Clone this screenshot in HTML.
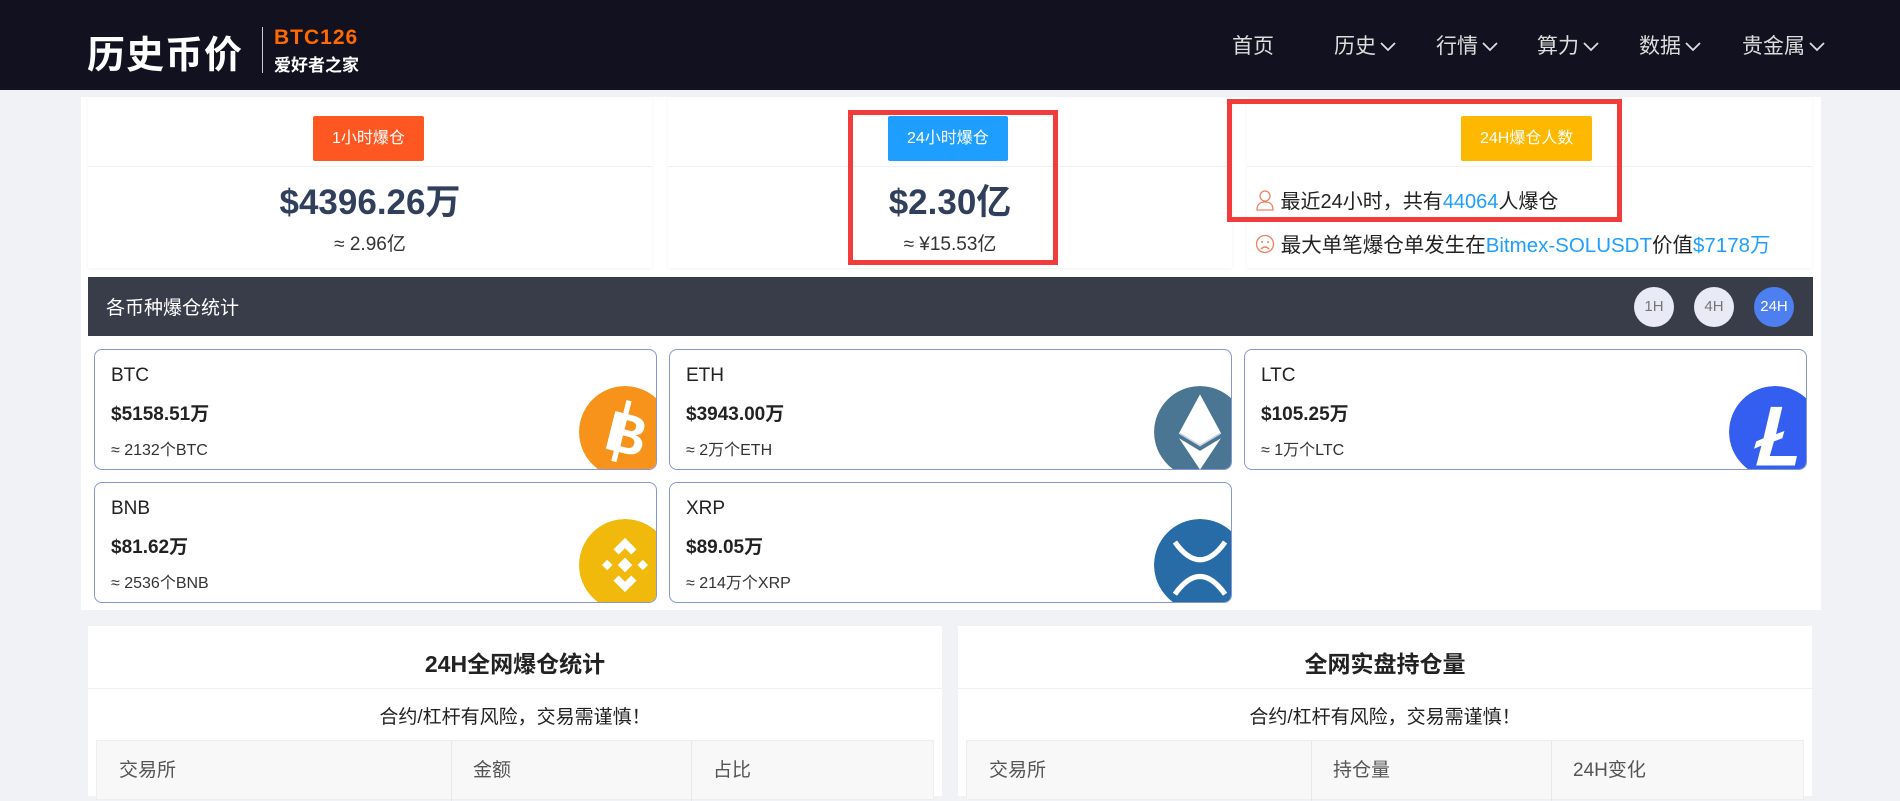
<!DOCTYPE html>
<html><head><meta charset="utf-8">
<style>
*{margin:0;padding:0;box-sizing:border-box}
body{width:1900px;height:788px;overflow:hidden;background:#f0f2f5;font-family:"Liberation Sans","Noto Sans CJK SC",sans-serif;color:#333;position:relative}
.abs{position:absolute}
.hdr{left:0;top:0;width:1900px;height:90px;background:#12111f}
.logo{left:87px;top:24px;color:#fff;font-size:38px;font-weight:bold;letter-spacing:1px}
.div{left:262px;top:27px;width:1px;height:46px;background:#ccc}
.btc{left:274px;top:26px;color:#ff6a00;font-size:21px;font-weight:bold;letter-spacing:1px}
.ahz{left:274px;top:51px;color:#fff;font-size:17px;font-weight:bold}
.nav{top:30px;color:#ddd;font-size:21px}
.nav svg{vertical-align:middle;margin-left:4px}
.main{left:81px;top:97px;width:1740px;height:513px;background:#fff}
.card{background:#fff;box-shadow:0 1px 3px rgba(0,0,0,.06);top:97px;height:171px}
.card .hd{height:70px;border-bottom:1px solid #f0f0f0}
.badge{position:absolute;top:19px;height:45px;line-height:45px;color:#fff;font-size:16px;padding:0 19px;border-radius:2px}
.big{position:absolute;width:100%;text-align:center;top:77px;font-size:35px;font-weight:bold;color:#2f3f5c}
.sm{position:absolute;width:100%;text-align:center;top:132px;font-size:19px;color:#333}
.red{border:5px solid #f23b3b}
.bar{left:88px;top:277px;width:1725px;height:59px;background:#393d49;color:#fff;font-size:19px;padding:16px 0 0 18px}
.circ{top:287px;width:40px;height:40px;border-radius:50%;background:#e8eaf5;color:#777;font-size:15px;text-align:center;line-height:40px}
.coin{width:563px;height:121px;border:1px solid #8497d4;border-radius:8px;overflow:hidden;background:#fff}
.coin .n{position:absolute;left:16px;top:15px;font-size:19px;color:#222}
.coin .v{position:absolute;left:16px;top:49px;font-size:19px;font-weight:bold;color:#222}
.coin .a{position:absolute;left:16px;top:86px;font-size:16px;color:#333}
.coin .ic{position:absolute;left:484px;top:36px;width:92px;height:92px;border-radius:50%}
.panel{top:626px;width:854px;height:170px;background:#fff}
.panel .t{position:absolute;width:100%;top:19px;text-align:center;font-size:23px;font-weight:bold;color:#222}
.panel .l{position:absolute;left:0;top:62px;width:100%;height:1px;background:#f0f0f0}
.panel .s{position:absolute;width:100%;top:76px;text-align:center;font-size:19px;color:#222}
.panel .tb{position:absolute;left:8px;top:114px;width:838px;height:60px;background:#f8f8f8;border:1px solid #eee}
.tb span{position:absolute;top:14px;font-size:19px;color:#555}
.tb i{position:absolute;top:0;width:1px;height:60px;background:#e8e8e8}
</style></head><body>
<div class="abs hdr"></div>
<div class="abs logo">历史币价</div>
<div class="abs div"></div>
<div class="abs btc">BTC126</div>
<div class="abs ahz">爱好者之家</div>
<div class="abs nav" style="left:1232px">首页</div>
<div class="abs nav" style="left:1334px">历史<svg width="16" height="10" viewBox="0 0 16 10"><path d="M1 1l7 7 7-7" fill="none" stroke="#ddd" stroke-width="1.8"/></svg></div>
<div class="abs nav" style="left:1436px">行情<svg width="16" height="10" viewBox="0 0 16 10"><path d="M1 1l7 7 7-7" fill="none" stroke="#ddd" stroke-width="1.8"/></svg></div>
<div class="abs nav" style="left:1537px">算力<svg width="16" height="10" viewBox="0 0 16 10"><path d="M1 1l7 7 7-7" fill="none" stroke="#ddd" stroke-width="1.8"/></svg></div>
<div class="abs nav" style="left:1639px">数据<svg width="16" height="10" viewBox="0 0 16 10"><path d="M1 1l7 7 7-7" fill="none" stroke="#ddd" stroke-width="1.8"/></svg></div>
<div class="abs nav" style="left:1742px">贵金属<svg width="16" height="10" viewBox="0 0 16 10"><path d="M1 1l7 7 7-7" fill="none" stroke="#ddd" stroke-width="1.8"/></svg></div>

<div class="abs main"></div>
<div class="abs card" style="left:88px;width:564px"><div class="hd"></div>
<div class="badge" style="left:225px;background:#fe5722">1小时爆仓</div>
<div class="big">$4396.26万</div><div class="sm">≈ 2.96亿</div></div>
<div class="abs card" style="left:668px;width:564px"><div class="hd"></div>
<div class="badge" style="left:220px;background:#1e9fff">24小时爆仓</div>
<div class="big">$2.30亿</div><div class="sm">≈ ¥15.53亿</div></div>
<div class="abs card" style="left:1247px;width:565px"><div class="hd"></div>
<div class="badge" style="left:214px;background:#ffb800">24H爆仓人数</div>
<div style="position:absolute;left:8px;top:88px;font-size:20px;color:#222"><svg width="20" height="22" viewBox="0 0 20 22" style="vertical-align:-3px"><circle cx="10" cy="7" r="5" fill="none" stroke="#f08060" stroke-width="1.3"/><path d="M2 21c0-6 3-8 8-8s8 2 8 8z" fill="none" stroke="#f08060" stroke-width="1.3"/></svg> 最近24小时，共有<span style="color:#1e9fff">44064</span>人爆仓</div>
<div style="position:absolute;left:8px;top:131px;font-size:20.5px;color:#222"><svg width="20" height="22" viewBox="0 0 20 22" style="vertical-align:-3px"><circle cx="10" cy="11" r="8.5" fill="none" stroke="#f08060" stroke-width="1.3"/><circle cx="7" cy="9" r="1" fill="#f08060"/><circle cx="13" cy="9" r="1" fill="#f08060"/><path d="M6 16q4-4 8 0" fill="none" stroke="#f08060" stroke-width="1.3"/></svg> 最大单笔爆仓单发生在<span style="color:#1e9fff">Bitmex-SOLUSDT</span>价值<span style="color:#1e9fff">$7178万</span></div></div>
<div class="abs red" style="left:848px;top:110px;width:210px;height:155px"></div>
<div class="abs red" style="left:1227px;top:99px;width:395px;height:123px"></div>

<div class="abs bar">各币种爆仓统计</div>
<div class="abs circ" style="left:1634px">1H</div>
<div class="abs circ" style="left:1694px">4H</div>
<div class="abs circ" style="left:1754px;background:#4e7ff0;color:#fff">24H</div>

<div class="abs coin" style="left:94px;top:349px"><div class="n">BTC</div><div class="v">$5158.51万</div><div class="a">≈ 2132个BTC</div>
<svg class="ic" viewBox="0 0 88 88"><circle cx="44" cy="44" r="44" fill="#f7931a"/><text x="46" y="64" font-size="54" font-weight="bold" fill="#fff" text-anchor="middle" transform="rotate(14 44 44)" font-family="Liberation Sans">B</text><rect x="38" y="14" width="5" height="60" fill="#fff" transform="rotate(14 44 44)"/></svg></div>
<div class="abs coin" style="left:669px;top:349px"><div class="n">ETH</div><div class="v">$3943.00万</div><div class="a">≈ 2万个ETH</div>
<svg class="ic" viewBox="0 0 88 88"><circle cx="44" cy="44" r="44" fill="#4a7694"/><path d="M44 8L24 45l20 12 20-12z" fill="#fff"/><path d="M24 50l20 30 20-30-20 12z" fill="#fff"/><path d="M24 45l20 12 20-12" fill="none" stroke="#c8d4de" stroke-width="1.5"/></svg></div>
<div class="abs coin" style="left:1244px;top:349px"><div class="n">LTC</div><div class="v">$105.25万</div><div class="a">≈ 1万个LTC</div>
<svg class="ic" viewBox="0 0 88 88"><circle cx="44" cy="44" r="44" fill="#345ef0"/><path d="M40 20h11l-6 26 8-3-2 7-8 3-4 14h26l-2 9H26l5-19-7 3 2-7 7-3z" fill="#fff"/></svg></div>
<div class="abs coin" style="left:94px;top:482px"><div class="n">BNB</div><div class="v">$81.62万</div><div class="a">≈ 2536个BNB</div>
<svg class="ic" viewBox="0 0 88 88"><circle cx="44" cy="44" r="44" fill="#f0b90b"/><g fill="#fff"><path d="M44 18l11 11-5 5-6-6-6 6-5-5z"/><path d="M44 70l11-11-5-5-6 6-6-6-5 5z"/><path d="M44 37l7 7-7 7-7-7z"/><path d="M22 44l5-5 5 5-5 5z"/><path d="M56 44l5-5 5 5-5 5z"/></g></svg></div>
<div class="abs coin" style="left:669px;top:482px"><div class="n">XRP</div><div class="v">$89.05万</div><div class="a">≈ 214万个XRP</div>
<svg class="ic" viewBox="0 0 88 88"><circle cx="44" cy="44" r="44" fill="#276ba7"/><path d="M20 22q24 34 48 0M20 72q24-34 48 0" fill="none" stroke="#fff" stroke-width="5"/></svg></div>

<div class="abs panel" style="left:88px"><div class="t">24H全网爆仓统计</div><div class="l"></div><div class="s">合约/杠杆有风险，交易需谨慎！</div>
<div class="tb"><span style="left:22px">交易所</span><i style="left:354px"></i><span style="left:376px">金额</span><i style="left:594px"></i><span style="left:616px">占比</span></div></div>
<div class="abs panel" style="left:958px"><div class="t">全网实盘持仓量</div><div class="l"></div><div class="s">合约/杠杆有风险，交易需谨慎！</div>
<div class="tb"><span style="left:22px">交易所</span><i style="left:344px"></i><span style="left:366px">持仓量</span><i style="left:584px"></i><span style="left:606px">24H变化</span></div></div>
</body></html>
